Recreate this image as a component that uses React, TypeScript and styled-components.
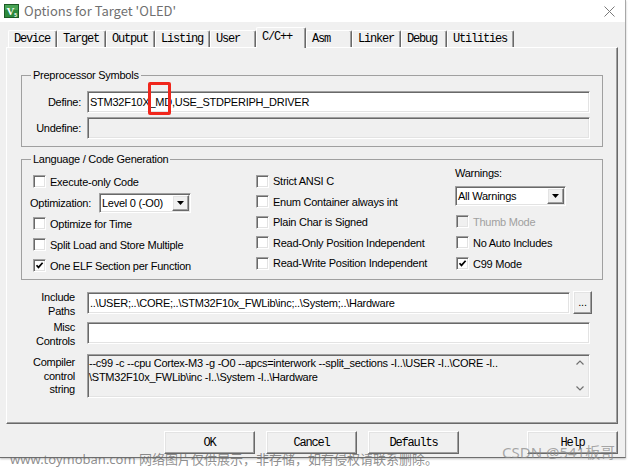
import React from 'react';
import styled, { createGlobalStyle, css } from 'styled-components';

const GlobalStyle = createGlobalStyle`
  html, body {
    margin: 0;
    padding: 0;
    background: #ffffff;
  }
  #root {
    width: 628px;
    height: 468px;
    position: relative;
    overflow: hidden;
  }
`;

const uiFont = css`
  font-family: 'Liberation Sans', Arial, sans-serif;
  font-size: 11px;
  letter-spacing: -0.25px;
  color: #000000;
`;

const monoFont = css`
  font-family: 'Liberation Mono', 'Courier New', monospace;
  font-size: 12px;
  letter-spacing: -1.2px;
  color: #000000;
`;

// classic 3D edges
const sunken = css`
  border: 1px solid;
  border-color: #a0a0a0 #ffffff #ffffff #a0a0a0;
  box-shadow: inset 1px 1px 0 #696969, inset -1px -1px 0 #e3e3e3;
`;

const raised = css`
  border: 1px solid;
  border-color: #ffffff #696969 #696969 #ffffff;
  box-shadow: inset -1px -1px 0 #a0a0a0, inset 1px 1px 0 #e3e3e3;
  background: #f0f0f0;
`;

const tabs = ['Device', 'Target', 'Output', 'Listing', 'User', 'C/C++', 'Asm', 'Linker', 'Debug', 'Utilities'];

const AppIcon = () => (
  <svg width="15" height="14" viewBox="0 0 15 14">
    <rect x="0.5" y="0.5" width="14" height="13" fill="#2d8a3c" stroke="#1b5a25" />
    <rect x="1" y="1" width="13" height="5" fill="#5cb868" opacity="0.55" />
    <text x="6.5" y="11" fontSize="11" fontWeight="bold" fill="#ffffff" textAnchor="middle" fontFamily="Liberation Serif, serif">
      V
    </text>
    <text x="11.6" y="12.6" fontSize="5" fontWeight="bold" fill="#ffffff" textAnchor="middle" fontFamily="Liberation Sans, sans-serif">
      5
    </text>
  </svg>
);

const CloseIcon = () => (
  <svg width="11" height="11" viewBox="0 0 11 11" style={{ marginLeft: 'auto' }}>
    <path d="M0.5 0.5 L10.5 10.5 M10.5 0.5 L0.5 10.5" stroke="#7a7a7a" strokeWidth="1" fill="none" />
  </svg>
);

const CheckMark = () => (
  <svg width="9" height="9" viewBox="0 0 9 9">
    <path d="M1.5 4.2 L3.5 6.4 L7.6 1.8" stroke="#000000" strokeWidth="1.7" fill="none" />
  </svg>
);

const DownTriangle = () => (
  <svg width="7" height="4" viewBox="0 0 7 4">
    <path d="M0 0 H7 L3.5 4 Z" fill="#000000" />
  </svg>
);

const Chevron = ({ up }: { up?: boolean }) => (
  <svg width="8" height="5" viewBox="0 0 8 5">
    <path d={up ? 'M0.5 4.5 L4 1 L7.5 4.5' : 'M0.5 0.5 L4 4 L7.5 0.5'} stroke="#707070" strokeWidth="1.2" fill="none" />
  </svg>
);

const CheckItem = ({
  label,
  checked,
  disabled,
  h,
  indent = 0,
}: {
  label: string;
  checked?: boolean;
  disabled?: boolean;
  h: number;
  indent?: number;
}) => (
  <CheckRow $h={h} $indent={indent} $disabled={disabled}>
    <Box $disabled={disabled}>{checked && <CheckMark />}</Box>
    <span>{label}</span>
  </CheckRow>
);

const App = () => (
  <>
    <GlobalStyle />
    <Window>
      <TitleBar>
        <AppIcon />
        <Title>Options for Target 'OLED'</Title>
        <CloseIcon />
      </TitleBar>
      <Body>
        <TabStrip>
          {tabs.map((t) => (
            <Tab key={t} $active={t === 'C/C++'}>
              {t}
            </Tab>
          ))}
        </TabStrip>
        <Panel>
          <Group>
            <Legend>Preprocessor Symbols</Legend>
            <SymbolGrid>
              <FieldLabel>Define:</FieldLabel>
              <TextBox>
                STM32F10X_MD,USE_STDPERIPH_DRIVER
                <Marker />
              </TextBox>
              <FieldLabel>Undefine:</FieldLabel>
              <TextBox $readOnly />
            </SymbolGrid>
          </Group>

          <Group $gap={5} $bottom={3}>
            <Legend>Language / Code Generation</Legend>
            <CodeGrid>
              <Column $top={5}>
                <CheckItem h={21} indent={3} label="Execute-only Code" />
                <OptRow>
                  <OptLabel>Optimization:</OptLabel>
                  <Select $w={92}>
                    <SelectText>Level 0 (-O0)</SelectText>
                    <DropButton>
                      <DownTriangle />
                    </DropButton>
                  </Select>
                </OptRow>
                <CheckItem h={21} indent={3} label="Optimize for Time" />
                <CheckItem h={21} indent={3} label="Split Load and Store Multiple" />
                <CheckItem h={21} indent={3} label="One ELF Section per Function" checked />
              </Column>
              <Column $top={5}>
                <CheckItem h={20.5} label="Strict ANSI C" />
                <CheckItem h={20.5} label="Enum Container always int" />
                <CheckItem h={20.5} label="Plain Char is Signed" />
                <CheckItem h={20.5} label="Read-Only Position Independent" />
                <CheckItem h={20.5} label="Read-Write Position Independent" />
              </Column>
              <Column $top={0}>
                <SmallLabel>Warnings:</SmallLabel>
                <Select $w={111} $mt={6} $mb={5}>
                  <SelectText>All Warnings</SelectText>
                  <DropButton>
                    <DownTriangle />
                  </DropButton>
                </Select>
                <CheckItem h={21} indent={1} label="Thumb Mode" disabled />
                <CheckItem h={21} indent={1} label="No Auto Includes" />
                <CheckItem h={21} indent={1} label="C99 Mode" checked />
              </Column>
            </CodeGrid>
          </Group>

          <PathGrid>
            <SideLabel>
              Include
              <br />
              Paths
            </SideLabel>
            <PathRow>
              <TextBox $grow>{'..\\USER;..\\CORE;..\\STM32F10x_FWLib\\inc;..\\System;..\\Hardware'}</TextBox>
              <BrowseButton>...</BrowseButton>
            </PathRow>
            <SideLabel>
              Misc
              <br />
              Controls
            </SideLabel>
            <PathRow>
              <TextBox $grow />
            </PathRow>
            <SideLabel $compact>
              Compiler
              <br />
              control
              <br />
              string
            </SideLabel>
            <ControlString>
              <ControlText>
                {'--c99 -c --cpu Cortex-M3 -g -O0 --apcs=interwork --split_sections -I..\\USER -I..\\CORE -I..'}
                <br />
                {'\\STM32F10x_FWLib\\inc -I..\\System -I..\\Hardware'}
              </ControlText>
              <ScrollArrows>
                <Chevron up />
                <Chevron />
              </ScrollArrows>
            </ControlString>
          </PathGrid>
        </Panel>

        <ButtonRow>
          <DialogButton>OK</DialogButton>
          <DialogButton>Cancel</DialogButton>
          <DialogButton>Defaults</DialogButton>
          <DialogButton $apart>Help</DialogButton>
        </ButtonRow>
      </Body>

      <Watermark>www.toymoban.com 网络图片仅供展示，非存储，如有侵权请联系删除。</Watermark>
      <Signature>CSDN @541板哥</Signature>
    </Window>
  </>
);

const Window = styled.div`
  position: relative;
  box-sizing: border-box;
  width: 626px;
  height: 458px;
  background: #f0f0f0;
  border-right: 1px solid #a8a8a8;
  border-bottom: 1px solid #6e6e6e;
  box-shadow: 0 1px 2px rgba(0, 0, 0, 0.25);
  display: flex;
  flex-direction: column;
`;

const TitleBar = styled.div`
  height: 22px;
  flex: none;
  background: #ffffff;
  display: flex;
  align-items: center;
  padding: 0 10px 0 4px;
`;

const Title = styled.span`
  margin-left: 5px;
  font-family: 'Noto Sans CJK SC', 'Noto Sans', sans-serif;
  font-size: 13px;
  line-height: 16px;
  margin-top: -1px;
  color: #707070;
  white-space: nowrap;
`;

const Body = styled.div`
  flex: 1;
  display: flex;
  flex-direction: column;
  padding: 5px 7px 0 6px;
`;

const TabStrip = styled.div`
  position: relative;
  z-index: 1;
  height: 20px;
  display: flex;
  align-items: flex-end;
  padding-left: 2px;
`;

const Tab = styled.div<{ $active?: boolean }>`
  ${monoFont};
  box-sizing: border-box;
  min-width: 46px;
  height: 17px;
  padding: 1px 6px 0 5px;
  line-height: 14px;
  white-space: nowrap;
  background: #f0f0f0;
  border-top: 1px solid #ffffff;
  border-left: 1px solid #ffffff;
  border-right: 1px solid #696969;
  box-shadow: inset -1px 0 0 #a0a0a0;
  border-radius: 2px 2px 0 0;

  ${(p) =>
    p.$active &&
    css`
      min-width: 50px;
      height: 21px;
      margin-bottom: -1px;
      padding-top: 2px;
      position: relative;
    `}
`;

const Panel = styled.div`
  box-sizing: border-box;
  height: 377px;
  flex: none;
  border-top: 1px solid #ffffff;
  border-left: 1px solid #ffffff;
  border-right: 1px solid #696969;
  border-bottom: 1px solid #696969;
  box-shadow: inset -1px -1px 0 #a0a0a0;
  padding: 20px 14px 0 14px;
`;

const Group = styled.fieldset<{ $gap?: number; $bottom?: number }>`
  margin: ${(p) => p.$gap ?? 0}px 0 0 0;
  padding: 0 12px ${(p) => p.$bottom ?? 7}px 0;
  min-width: 0;
  border: 1px solid #a0a0a0;
`;

const Legend = styled.legend`
  ${uiFont};
  line-height: 14px;
  padding: 0 2px;
  margin-left: 9px;
`;

const SymbolGrid = styled.div`
  display: grid;
  grid-template-columns: 59px 1fr;
  column-gap: 6px;
  row-gap: 4px;
  padding-top: 9px;
`;

const FieldLabel = styled.span`
  ${uiFont};
  text-align: right;
  align-self: center;
`;

const TextBox = styled.div<{ $readOnly?: boolean; $grow?: boolean }>`
  ${sunken};
  ${uiFont};
  position: relative;
  box-sizing: border-box;
  height: 22px;
  line-height: 20px;
  padding-left: 2px;
  white-space: nowrap;
  background: ${(p) => (p.$readOnly ? '#f0f0f0' : '#ffffff')};
  ${(p) => p.$grow && 'flex: 1;'}
`;

const Marker = styled.span`
  position: absolute;
  left: 60px;
  top: -10px;
  width: 23px;
  height: 33px;
  box-sizing: border-box;
  border: 3px solid #f0261c;
  border-radius: 2px;
`;

const CodeGrid = styled.div`
  display: grid;
  grid-template-columns: 226px 199px 1fr;
  padding-left: 8px;
`;

const Column = styled.div<{ $top: number }>`
  display: flex;
  flex-direction: column;
  padding-top: ${(p) => p.$top}px;
`;

const CheckRow = styled.div<{ $h: number; $indent: number; $disabled?: boolean }>`
  ${uiFont};
  height: ${(p) => p.$h}px;
  display: flex;
  align-items: center;
  gap: 4px;
  padding-left: ${(p) => p.$indent}px;
  white-space: nowrap;
  color: ${(p) => (p.$disabled ? '#a0a0a0' : '#000000')};
`;

const Box = styled.span<{ $disabled?: boolean }>`
  ${sunken};
  box-sizing: border-box;
  width: 13px;
  height: 13px;
  flex: none;
  display: flex;
  align-items: center;
  justify-content: center;
  background: ${(p) => (p.$disabled ? '#f0f0f0' : '#ffffff')};
`;

const OptRow = styled.div`
  height: 21px;
  display: flex;
  align-items: center;
`;

const OptLabel = styled.span`
  ${uiFont};
  width: 69px;
  white-space: nowrap;
`;

const SmallLabel = styled.span`
  ${uiFont};
  line-height: 14px;
`;

const Select = styled.div<{ $w: number; $mt?: number; $mb?: number }>`
  ${sunken};
  ${uiFont};
  box-sizing: border-box;
  width: ${(p) => p.$w}px;
  height: 20px;
  flex: none;
  margin: ${(p) => p.$mt ?? 0}px 0 ${(p) => p.$mb ?? 0}px 0;
  background: #ffffff;
  display: flex;
  align-items: center;
  padding: 0 1px 0 2px;
`;

const SelectText = styled.span`
  flex: 1;
  white-space: nowrap;
`;

const DropButton = styled.span`
  ${raised};
  box-sizing: border-box;
  width: 17px;
  height: 16px;
  display: flex;
  align-items: center;
  justify-content: center;
`;

const PathGrid = styled.div`
  display: grid;
  grid-template-columns: 54px 1fr;
  column-gap: 12px;
  row-gap: 2px;
  margin: 10px 13px 0 0;
`;

const SideLabel = styled.span<{ $compact?: boolean }>`
  ${uiFont};
  text-align: right;
  line-height: ${(p) => (p.$compact ? '13.5px' : '14px')};
  ${(p) => p.$compact && 'padding-top: 2px; margin-top: 4px;'}
`;

const PathRow = styled.div`
  display: flex;
  align-items: flex-start;
  gap: 3px;
  padding-top: 2px;
`;

const BrowseButton = styled.div`
  ${raised};
  ${uiFont};
  box-sizing: border-box;
  width: 19px;
  height: 23px;
  margin: -1px -2px 0 0;
  display: flex;
  align-items: center;
  justify-content: center;
  line-height: 1;
`;

const ControlString = styled.div`
  ${sunken};
  box-sizing: border-box;
  height: 44px;
  margin-top: 4px;
  background: #f0f0f0;
  display: flex;
`;

const ControlText = styled.div`
  ${uiFont};
  flex: 1;
  line-height: 14px;
  padding: 1px 0 0 1px;
  white-space: nowrap;
  overflow: hidden;
`;

const ScrollArrows = styled.div`
  width: 18px;
  display: flex;
  flex-direction: column;
  align-items: center;
  justify-content: space-between;
  padding: 5px 0 6px;
`;

const ButtonRow = styled.div`
  display: flex;
  gap: 11px;
  margin-top: 7px;
  padding-left: 158px;
`;

const DialogButton = styled.div<{ $apart?: boolean }>`
  ${raised};
  ${monoFont};
  box-sizing: border-box;
  width: 91px;
  height: 23px;
  display: flex;
  align-items: center;
  justify-content: center;
  ${(p) => p.$apart && 'margin-left: 57px;'}
`;

const Watermark = styled.div`
  position: absolute;
  left: 10px;
  top: 450px;
  font-family: 'Noto Sans', 'Noto Sans CJK SC', sans-serif;
  font-size: 13px;
  line-height: 18px;
  color: rgba(105, 105, 105, 0.75);
  white-space: nowrap;
`;

const Signature = styled.div`
  position: absolute;
  left: 502px;
  top: 442px;
  font-family: 'Noto Sans', 'Noto Sans CJK SC', sans-serif;
  font-size: 15px;
  line-height: 20px;
  color: rgba(140, 140, 140, 0.75);
  white-space: nowrap;
`;

export default App;
